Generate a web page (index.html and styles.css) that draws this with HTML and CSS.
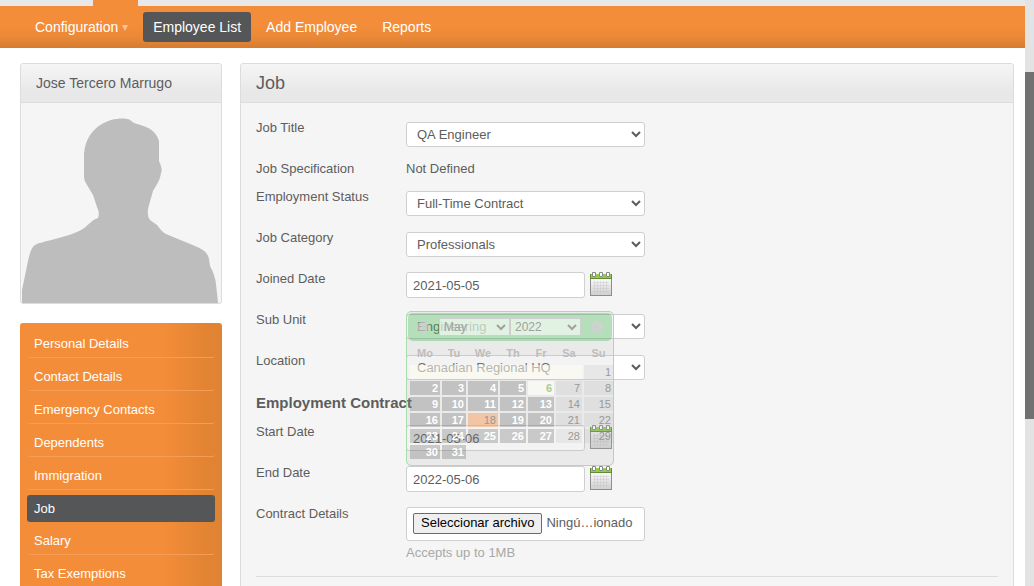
FILE: index.html
```html
<!DOCTYPE html>
<html lang="en">
<head>
<meta charset="utf-8">
<title>Job</title>
<link rel="stylesheet" href="styles.css">
</head>
<body>
<svg class="defs" width="0" height="0" aria-hidden="true">
  <linearGradient id="page-shade" x1="0" y1="0" x2="0" y2="1">
    <stop offset="0" stop-color="#fafafa"/><stop offset="1" stop-color="#cfcfcf"/>
  </linearGradient>
  <symbol id="calendar" viewBox="0 0 22 24">
    <rect x=".5" y="6.500" width="21" height="17" fill="url(#page-shade)" stroke="#8d8d8d"/>
    <path d="M3 10.500h16M3 13.500h16M3 16.500h16M3 19.500h16M4.500 9v12M7.500 9v12M10.500 9v12M13.500 9v12M16.500 9v12" stroke="#bbb" stroke-opacity=".3" fill="none"/>
    <rect x="0" y="2" width="22" height="5" fill="#5f8f2a"/>
    <rect x="1" y="2" width="20" height="4" fill="#92cc4d"/>
    <path d="M2.500.5h3v4h-3zM9.500.5h3v4h-3zM16.500.5h3v4h-3z" fill="#fff" stroke="#888"/>
  </symbol>
</svg>
<div class="window">
  <div class="page">
    <div class="tabs"><span class="tab-active"></span></div>
    <nav class="nav">
      <a href="#" class="nav-link">Configuration <span class="caret"></span></a>
      <a href="#" class="nav-link active">Employee List</a>
      <a href="#" class="nav-link">Add Employee</a>
      <a href="#" class="nav-link">Reports</a>
    </nav>
    <div class="content">
      <aside class="sidebar">
        <section class="panel">
          <h2 class="panel-head name">Jose Tercero Marrugo</h2>
          <svg class="photo" viewBox="0 0 200 200" role="img" aria-label="Profile photo">
            <path fill="#bdbdbd" d="M1 200V187L7 158Q10 144 14 142C18 139 48 134 60 127C66 124 70 117 77 115Q79 110 76 104L72 92L66 82Q63 78 63 74V55C63 33 75 22 90 17C98 15 106 15 109 17L113 20C121 23 134 24 138 38V58Q142 66 140 70C139 78 134 84 132 88L128 102Q125 112 129 117L136 122Q141 129 145 131L174 143Q187 148 188 156L189 163Q194 172 195 181L197 200Z"/>
          </svg>
        </section>
        <nav class="menu">
          <a href="#" class="menu-item">Personal Details</a>
          <a href="#" class="menu-item">Contact Details</a>
          <a href="#" class="menu-item">Emergency Contacts</a>
          <a href="#" class="menu-item">Dependents</a>
          <a href="#" class="menu-item">Immigration</a>
          <a href="#" class="menu-item current">Job</a>
          <a href="#" class="menu-item">Salary</a>
          <a href="#" class="menu-item">Tax Exemptions</a>
        </nav>
      </aside>
      <main class="panel main">
        <h1 class="panel-head title">Job</h1>
        <form class="form">
          <div class="row"><label for="job-title">Job Title</label>
            <div class="field"><select id="job-title" class="box"><option>QA Engineer</option></select></div></div>
          <div class="row text-row"><span>Job Specification</span><span>Not Defined</span></div>
          <div class="row"><label for="status">Employment Status</label>
            <div class="field"><select id="status" class="box"><option>Full-Time Contract</option></select></div></div>
          <div class="row"><label for="category">Job Category</label>
            <div class="field"><select id="category" class="box"><option>Professionals</option></select></div></div>
          <div class="row"><label for="joined">Joined Date</label>
            <div class="field date-field">
              <input id="joined" class="box date" type="text" value="2021-05-05">
              <button type="button" class="pick" aria-label="Choose joined date"><svg><use href="#calendar"/></svg></button>
              <div class="picker">
                <div class="picker-head">
                  <button type="button" class="step" aria-label="Previous month"><svg viewBox="0 0 12 12"><circle cx="6" cy="6" r="6"/><path d="M7.500 3v6L4 6z"/></svg></button>
                  <div class="picker-selects">
                    <select aria-label="Month"><option>May</option></select>
                    <select aria-label="Year"><option>2022</option></select>
                  </div>
                  <button type="button" class="step" aria-label="Next month"><svg viewBox="0 0 12 12"><circle cx="6" cy="6" r="6"/><path d="M4.500 3v6L8 6z"/></svg></button>
                </div>
                <table class="days">
                  <colgroup><col class="c-xl"><col class="c-s"><col class="c-xl"><col class="c-m"><col class="c-m"><col class="c-m"><col class="c-l"></colgroup>
                  <thead><tr><th>Mo</th><th>Tu</th><th>We</th><th>Th</th><th>Fr</th><th>Sa</th><th>Su</th></tr></thead>
                  <tbody>
                    <tr><td class="none" colspan="6"></td><td class="off">1</td></tr>
                    <tr><td>2</td><td>3</td><td>4</td><td>5</td><td class="chosen">6</td><td class="off">7</td><td class="off">8</td></tr>
                    <tr><td>9</td><td>10</td><td>11</td><td>12</td><td>13</td><td class="off">14</td><td class="off">15</td></tr>
                    <tr><td>16</td><td>17</td><td class="today">18</td><td>19</td><td>20</td><td class="off">21</td><td class="off">22</td></tr>
                    <tr><td>23</td><td>24</td><td>25</td><td>26</td><td>27</td><td class="off">28</td><td class="off">29</td></tr>
                    <tr><td>30</td><td>31</td></tr>
                  </tbody>
                </table>
              </div>
            </div></div>
          <div class="row"><label for="unit">Sub Unit</label>
            <div class="field"><select id="unit" class="box"><option>Engineering</option></select></div></div>
          <div class="row"><label for="location">Location</label>
            <div class="field"><select id="location" class="box"><option>Canadian Regional HQ</option></select></div></div>
          <h2 class="section-title">Employment Contract</h2>
          <div class="row"><label for="start">Start Date</label>
            <div class="field date-field"><input id="start" class="box date" type="text" value="2021-05-06">
              <button type="button" class="pick" aria-label="Choose start date"><svg><use href="#calendar"/></svg></button></div></div>
          <div class="row"><label for="end">End Date</label>
            <div class="field date-field"><input id="end" class="box date" type="text" value="2022-05-06">
              <button type="button" class="pick" aria-label="Choose end date"><svg><use href="#calendar"/></svg></button></div></div>
          <div class="row"><label for="contract">Contract Details</label>
            <div class="upload">
              <div class="box file">
                <input id="contract" class="file-input" type="file">
                <label for="contract" class="file-button">Seleccionar archivo</label>
                <span>Ningú…ionado</span>
              </div>
              <span class="hint">Accepts up to 1MB</span>
            </div></div>
          <hr class="rule">
        </form>
      </main>
    </div>
  </div>
  <div class="scrollbar"><div class="thumb"></div></div>
</div>
</body>
</html>
```
FILE: styles.css
```css
* { box-sizing: border-box; }

body {
  margin: 0;
  color: #5d5d5d;
  background: #fff;
  font: 13px/18px "Liberation Sans", Arial, sans-serif;
}

a { color: inherit; text-decoration: none; }
input, select, button { font: inherit; color: inherit; margin: 0; }
button { border: 0; padding: 0; background: none; }
.defs { position: absolute; }

.window { display: flex; height: 100vh; overflow: hidden; }
.page { flex: 1; min-width: 0; overflow: hidden; }

.scrollbar { width: 9px; padding-top: 72px; background: #e3e3e3; }
.thumb { height: 347px; background: #717171; }

.tabs { height: 6px; padding-left: 93px; background: #e8e8e8; }
.tab-active { display: block; width: 45px; height: 6px; background: #f48d39; }

.nav {
  display: flex;
  align-items: center;
  gap: 5px;
  height: 42px;
  padding-left: 25px;
  color: #fff;
  background: linear-gradient(#f48d39 45%, #e98936 75%, #d67c31);
  font-size: 14px;
}
.nav-link { padding: 6px 10px; border-radius: 3px; }
.nav-link.active { background: #555657; }
.caret {
  display: inline-block;
  margin-bottom: 1px;
  border: 3px solid transparent;
  border-top: 6px solid #f9c295;
  border-bottom: 0;
}

.content { display: flex; align-items: flex-start; gap: 18px; padding: 15px 11px 0 20px; }
.sidebar { width: 202px; flex: none; }

.panel { border: 1px solid #dcdcdc; border-radius: 3px; background: #f5f5f5; overflow: hidden; }
.main { flex: 1; min-width: 0; }
.panel-head {
  margin: 0;
  padding: 0 15px;
  border-bottom: 1px solid #dcdcdc;
  background: linear-gradient(#f5f5f5, #e8e8e8 75%);
  font-weight: 400;
  line-height: 38px;
}
.name { font-size: 14px; }
.title { font-size: 18px; }
.photo { display: block; width: 100%; }

.menu {
  display: flex;
  flex-direction: column;
  gap: 5px;
  margin-top: 19px;
  padding: 7px;
  border-radius: 3px;
  color: #fff;
  background: linear-gradient(90deg, #f48d39 70%, #e08333 95%);
}
.menu-item { padding: 5px 7px 4px; border-bottom: 1px solid #f59c56; border-radius: 3px; }
.menu-item.current { border-bottom: 0; background: #555657; }

.form { display: flex; flex-direction: column; gap: 10px; padding: 16px 15px; }
.row { display: grid; grid-template-columns: 150px 1fr; min-height: 31px; }
.text-row { min-height: 18px; }
.field { position: relative; display: flex; align-items: center; gap: 5px; height: 31px; }
.date-field { align-items: flex-start; padding-top: 2px; }
.box { border: 1px solid #cfcfcf; border-radius: 3px; background: #fff; }
select.box { width: 239px; height: 25px; padding: 0 4px 0 6px; }
.date { width: 179px; height: 26px; padding: 0 6px; }
.pick { width: 22px; height: 24px; }
.pick svg { display: block; width: 22px; height: 24px; }

.section-title { margin: 0; font-size: 15px; line-height: 20px; }

.upload { display: flex; flex-direction: column; align-items: flex-start; gap: 3px; padding-top: 2px; }
.file { display: flex; align-items: center; gap: 4px; width: 239px; height: 34px; padding: 0 6px 2px; }
.file-input { position: absolute; width: 1px; height: 1px; opacity: 0; }
.file-button {
  padding: 0 7px 1px;
  border: 1px solid #6b6b6b;
  border-radius: 2px;
  color: #000;
  background: #efefef;
}
.hint { color: #a8a8a8; }
.rule { width: 100%; height: 1px; margin: 4px 0 0; border: 0; background: #dcdcdc; }

.picker {
  position: absolute;
  z-index: 2;
  top: 41px;
  left: 0;
  width: 208px;
  height: 155px;
  padding: 1px;
  border: 1px solid #a9dbad;
  border-radius: 5px;
  background: rgba(190, 190, 190, .18);
}
.picker-head {
  display: flex;
  align-items: center;
  justify-content: space-between;
  height: 28px;
  padding: 0 9px;
  border-radius: 5px;
  background: rgba(20, 170, 40, .28);
}
.picker-selects { display: flex; }
.picker-selects select {
  width: 71px;
  height: 18px;
  padding: 0;
  border: 1px solid #cfcfcf;
  border-radius: 0;
  color: #a0a0a0;
  background: rgba(255, 255, 255, .6);
  font-size: 12px;
  line-height: 16px;
}
.step svg { display: block; width: 12px; height: 12px; fill: rgba(225, 200, 225, .6); }
.step path { fill: #b1e0b5; }

.days { width: 204px; table-layout: fixed; border-spacing: 2px; font-size: 11px; font-weight: 700; line-height: 14px; }
.c-xl { width: 30px; }
.c-l { width: 29px; }
.c-m { width: 26px; }
.c-s { width: 24px; }
.days th { height: 20px; padding: 0; color: #bdbdbd; }
.days td { height: 14px; padding: 0 2px; text-align: right; color: #fff; background: rgba(80, 80, 80, .26); }
.days .none { background: rgba(255, 253, 240, .5); }
.days .off { color: #999; background: rgba(150, 150, 150, .12); font-weight: 400; }
.days .chosen { color: #a8cf8c; background: rgba(255, 255, 250, .6); }
.days .today { color: #999; background: rgba(250, 160, 95, .5); font-weight: 400; }
```
